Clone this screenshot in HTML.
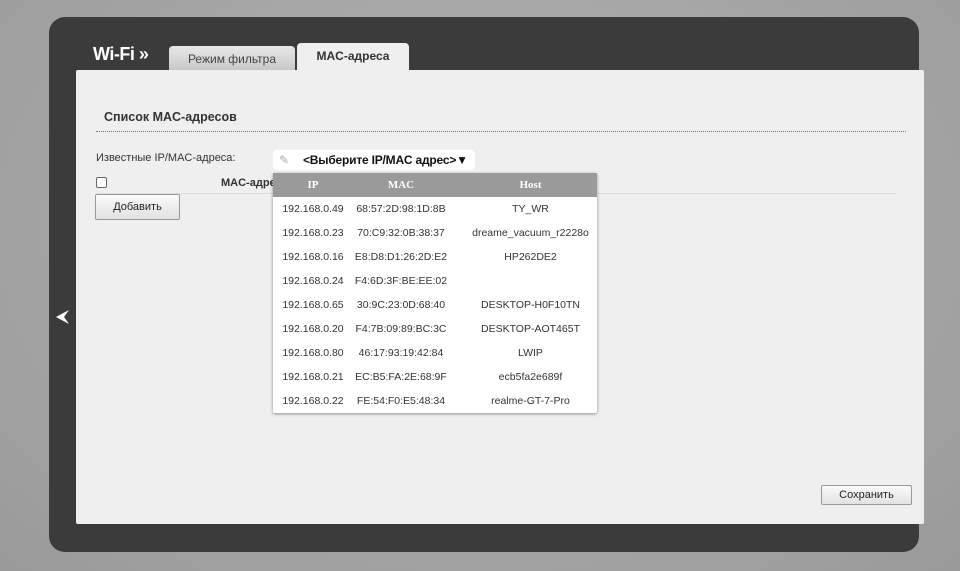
<!DOCTYPE html>
<html><head><meta charset="utf-8"><style>
*{margin:0;padding:0;box-sizing:border-box}
body{width:960px;height:571px;overflow:hidden;background:radial-gradient(ellipse at 50% 40%,#b4b4b4,#9a9a9a);font-family:"Liberation Sans",sans-serif;position:relative}
.dark{position:absolute;left:49px;top:17px;width:870px;height:535px;background:#3b3b3b;border-radius:16px}
.white{position:absolute;left:76px;top:70px;width:848px;height:454px;background:#efefef;border-radius:2px}
.wifi{position:absolute;left:93px;top:44px;color:#fff;font-weight:bold;font-size:18px;letter-spacing:-0.5px}
.tab{position:absolute;text-align:center;font-size:12px;border-radius:4px 4px 0 0}
.t1{left:169px;top:46px;width:126px;height:24px;background:linear-gradient(#e8e8e8,#c8c8c8);color:#444;line-height:26px}
.t2{left:297px;top:43px;width:112px;height:27px;background:#efefef;color:#333;font-weight:bold;line-height:26px}
.h{position:absolute;left:104px;top:110px;font-size:12.5px;font-weight:bold;color:#333}
.hr{position:absolute;left:96px;top:131px;width:810px;border-top:1px dotted #777}
.lbl{position:absolute;font-size:11px;color:#333;white-space:nowrap}
.sel{position:absolute;left:273px;top:150px;width:202px;height:20px;background:#fff;border-radius:4px;font-size:12px;font-weight:bold;line-height:20px;padding-left:30px;color:#111;white-space:nowrap;letter-spacing:-0.2px}
.cb{position:absolute;left:96px;top:177px;width:11px;height:11px;border:1px solid #666;border-radius:2px;background:#fff}
.btn{position:absolute;border:1px solid #999;border-radius:2px;background:linear-gradient(#fafafa,#e2e2e2);font-size:12px;text-align:center;color:#222}
.line{position:absolute;left:96px;top:193px;width:800px;border-top:1px solid #ddd}
.pop{position:absolute;left:273px;top:173px;width:324px;height:240px;background:#fff;box-shadow:0 1px 3px rgba(0,0,0,.4);border-radius:2px;font-size:10.5px;color:#333}
.ph{height:24px;background:#9a9a9a;color:#fff;font-weight:bold;font-family:"Liberation Serif",serif;font-size:11px;position:relative}
.r{height:24px;position:relative}
.c{position:absolute;top:0;line-height:24px;text-align:center;white-space:nowrap}
.a{left:0;width:80px}.b{left:80px;width:96px}.d{left:190px;width:135px}
.arrow{position:absolute;left:56px;top:309px}
</style></head><body>
<div class="dark"></div>
<div class="white"></div>
<div class="wifi">Wi-Fi »</div>
<div class="tab t1">Режим фильтра</div>
<div class="tab t2">MAC-адреса</div>
<div class="h">Список MAC-адресов</div>
<div class="hr"></div>
<div class="lbl" style="left:96px;top:152px">Известные IP/MAC-адреса:</div>
<div class="sel">&lt;Выберите IP/MAC адрес&gt;▼<span style="position:absolute;left:6px;top:0;color:#aaa;font-weight:normal">✎</span></div>
<div class="cb"></div>
<div class="lbl" style="left:221px;top:177px;font-weight:bold">MAC-адрес</div>
<div class="line"></div>
<div class="btn" style="left:95px;top:194px;width:85px;height:26px;line-height:24px;font-size:11px">Добавить</div>
<div class="btn" style="left:821px;top:485px;width:91px;height:20px;line-height:18px;font-size:11px">Сохранить</div>
<svg class="arrow" width="14" height="16"><path d="M0 8 L13 1 L8 8 L13 15 Z" fill="#fff"/></svg>
<div class="pop">
<div class="ph"><div class="c a">IP</div><div class="c b">MAC</div><div class="c d">Host</div></div>
<div class="r"><div class="c a">192.168.0.49</div><div class="c b">68:57:2D:98:1D:8B</div><div class="c d">TY_WR</div></div>
<div class="r"><div class="c a">192.168.0.23</div><div class="c b">70:C9:32:0B:38:37</div><div class="c d">dreame_vacuum_r2228o</div></div>
<div class="r"><div class="c a">192.168.0.16</div><div class="c b">E8:D8:D1:26:2D:E2</div><div class="c d">HP262DE2</div></div>
<div class="r"><div class="c a">192.168.0.24</div><div class="c b">F4:6D:3F:BE:EE:02</div><div class="c d"></div></div>
<div class="r"><div class="c a">192.168.0.65</div><div class="c b">30:9C:23:0D:68:40</div><div class="c d">DESKTOP-H0F10TN</div></div>
<div class="r"><div class="c a">192.168.0.20</div><div class="c b">F4:7B:09:89:BC:3C</div><div class="c d">DESKTOP-AOT465T</div></div>
<div class="r"><div class="c a">192.168.0.80</div><div class="c b">46:17:93:19:42:84</div><div class="c d">LWIP</div></div>
<div class="r"><div class="c a">192.168.0.21</div><div class="c b">EC:B5:FA:2E:68:9F</div><div class="c d">ecb5fa2e689f</div></div>
<div class="r"><div class="c a">192.168.0.22</div><div class="c b">FE:54:F0:E5:48:34</div><div class="c d">realme-GT-7-Pro</div></div>
</div>
</body></html>
